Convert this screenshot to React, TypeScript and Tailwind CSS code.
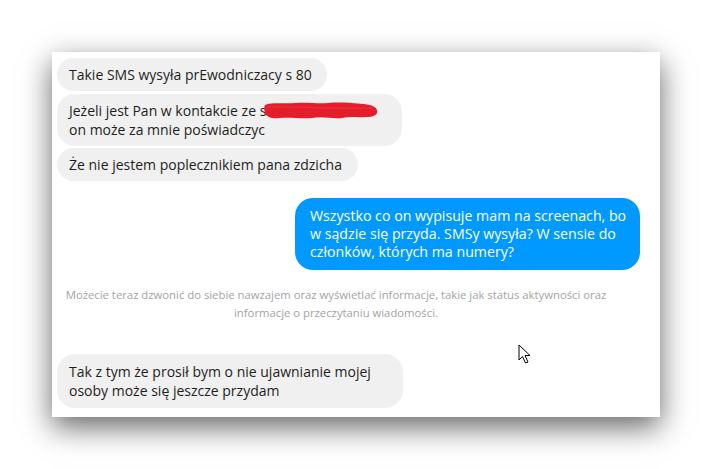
import React from "react";

const font = { fontFamily: '"Open Sans", "Noto Sans", sans-serif' };

function Gray({ children, className = "" }: { children: React.ReactNode; className?: string }) {
  return (
    <div
      className={`relative self-start rounded-[18px] bg-[#f1f0f0] px-[12px] py-[7px] text-[14px] leading-[19px] text-[#1c1e21] ${className}`}
    >
      {children}
    </div>
  );
}

export default function App() {
  return (
    <div className="h-[469px] w-[712px] bg-white pt-[52px] pl-[52px]" style={font}>
      <div className="relative flex h-[365px] w-[608px] flex-col bg-white pt-[6px] pl-[5px] pr-[20px] shadow-[0_10px_28px_rgba(0,0,0,0.6)]">
        <Gray className="w-[270px]">Takie SMS wysyła prEwodniczacy s 80</Gray>
        <Gray className="mt-[3px] w-[345px]">
          Jeżeli jest Pan w kontakcie ze s
          <br />
          on może za mnie poświadczyc
          <svg
            className="absolute left-[205px] top-[7px]"
            width="118"
            height="20"
            viewBox="0 0 118 20"
          >
            <path
              d="M3 4 C10 1, 22 3, 34 2 C46 1, 56 3, 66 2 C78 1, 90 2, 102 3 C110 4, 115 6, 115 10 C116 14, 111 16, 104 16 C96 17, 88 15, 80 17 C70 18, 60 15, 50 17 C40 18, 28 16, 18 17 C10 18, 4 16, 3 12 C2 9, 2 6, 3 4 Z"
              fill="#e51d2a"
            />
            <path d="M4 6 C20 5, 60 8, 112 7" stroke="#f04a52" strokeWidth="1" fill="none" opacity="0.5" />
          </svg>
        </Gray>
        <Gray className="mt-[2px] w-[301px]">Że nie jestem poplecznikiem pana zdzicha</Gray>
        <div className="mt-[17px] w-[345px] self-end rounded-[18px] bg-[#0099ff] py-[9px] pl-[15px] pr-[8px] text-[14.2px] leading-[18px] text-white">
          Wszystko co on wypisuje mam na screenach, bo w sądzie się przyda. SMSy wysyła? W sensie do członków, których ma numery?
        </div>
        <div className="mt-[16px] w-[558px] text-center text-[11.3px] leading-[18px] text-[#a3a3a3]">
          Możecie teraz dzwonić do siebie nawzajem oraz wyświetlać informacje, takie jak status aktywności oraz
          informacje o przeczytaniu wiadomości.
        </div>
        <Gray className="mt-[32px] w-[346px] py-[8px]">
          Tak z tym że prosił bym o nie ujawnianie mojej osoby może się jeszcze przydam
        </Gray>
        <svg
          className="absolute left-[466px] top-[292px]"
          width="14"
          height="21"
          viewBox="0 0 14 21"
        >
          <path
            d="M1 1 L1 16 L4.5 12.5 L7.5 19 L10 18 L7 11.5 L12 11.5 Z"
            fill="white"
            stroke="black"
            strokeWidth="1"
            strokeLinejoin="miter"
          />
        </svg>
      </div>
    </div>
  );
}
